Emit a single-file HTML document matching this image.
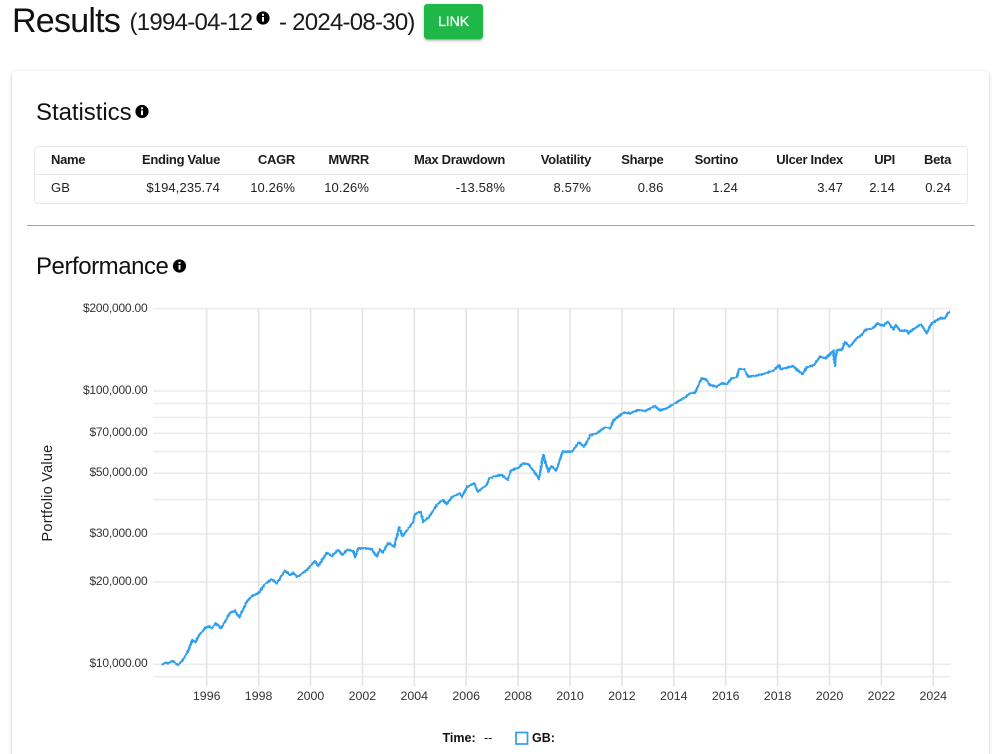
<!DOCTYPE html>
<html lang="en">
<head>
<meta charset="utf-8">
<title>Results</title>
<style>
html,body{margin:0;padding:0;background:#fff;width:1000px;height:754px;overflow:hidden;}
body{font-family:"Liberation Sans",sans-serif;color:#000;}
#wrap{position:relative;width:1000px;height:754px;overflow:hidden;background:#fff;}
.a{position:absolute;white-space:nowrap;}
.card{position:absolute;left:12px;top:71px;width:977px;height:700px;background:#fff;border-radius:4px;box-shadow:0 2px 1px -1px rgba(0,0,0,.2),0 1px 1px 0 rgba(0,0,0,.14),0 1px 4px 0 rgba(0,0,0,.18);}
.btn{position:absolute;left:424px;top:4px;width:59px;height:34.5px;background:#1db848;border-radius:3px;color:#fff;font-size:14px;line-height:34.5px;text-align:center;-webkit-text-stroke:.3px #fff;box-shadow:0 3px 1px -2px rgba(0,0,0,.2),0 2px 2px 0 rgba(0,0,0,.14),0 1px 5px 0 rgba(0,0,0,.12);}
.tbl{position:absolute;left:34px;top:146px;width:932px;height:56px;border:1px solid #e8e8e8;border-radius:4px;}
.line{position:absolute;left:35px;top:174px;width:932px;height:1px;background:#e8e8e8;}
.c{position:absolute;white-space:nowrap;font-size:13px;line-height:16px;color:#222;letter-spacing:.12px;}
.h{font-weight:bold;letter-spacing:-.3px;top:152px;color:#1c1c1c;}
.d{top:180px;}
.r{transform:translateX(-100%);}
.hr{position:absolute;left:27px;top:225px;width:948px;height:1px;background:#a3a3a3;}
svg{position:absolute;left:0;top:0;}
</style>
</head>
<body>
<div id="wrap">
<div class="a" style="left:12px;top:0px;font-size:34px;line-height:42px;letter-spacing:-.75px;color:#111;">Results</div>
<div class="a" style="left:129.5px;top:7px;font-size:24px;line-height:32px;letter-spacing:-.72px;color:#1a1a1a;">(1994-04-12</div>
<div class="a" style="left:279px;top:7px;font-size:24px;line-height:32px;letter-spacing:-.75px;color:#1a1a1a;">- 2024-08-30)</div>
<div class="btn">LINK</div>

<div class="card"></div>
<div class="a" style="left:36px;top:98px;font-size:24px;line-height:30px;letter-spacing:-.05px;color:#111;">Statistics</div>

<div class="tbl"></div>
<div class="line"></div>
<span class="c h" style="left:51px;">Name</span>
<span class="c h r" style="left:220px;">Ending Value</span>
<span class="c h r" style="left:295px;">CAGR</span>
<span class="c h r" style="left:369px;">MWRR</span>
<span class="c h r" style="left:505px;">Max Drawdown</span>
<span class="c h r" style="left:591px;">Volatility</span>
<span class="c h r" style="left:663.5px;">Sharpe</span>
<span class="c h r" style="left:738px;">Sortino</span>
<span class="c h r" style="left:843px;">Ulcer Index</span>
<span class="c h r" style="left:895px;">UPI</span>
<span class="c h r" style="left:951px;">Beta</span>
<span class="c d" style="left:51px;">GB</span>
<span class="c d r" style="left:220px;">$194,235.74</span>
<span class="c d r" style="left:295px;">10.26%</span>
<span class="c d r" style="left:369px;">10.26%</span>
<span class="c d r" style="left:505px;">-13.58%</span>
<span class="c d r" style="left:591px;">8.57%</span>
<span class="c d r" style="left:663.5px;">0.86</span>
<span class="c d r" style="left:738px;">1.24</span>
<span class="c d r" style="left:843px;">3.47</span>
<span class="c d r" style="left:895px;">2.14</span>
<span class="c d r" style="left:951px;">0.24</span>

<div class="hr"></div>
<div class="a" style="left:36px;top:252px;font-size:24px;line-height:30px;letter-spacing:-.45px;color:#111;">Performance</div>

<svg width="1000" height="754" viewBox="0 0 1000 754" xmlns="http://www.w3.org/2000/svg">
<defs>
<filter id="jit" x="-2%" y="-2%" width="104%" height="104%">
<feTurbulence type="fractalNoise" baseFrequency="0.5" numOctaves="2" seed="4" result="n"/>
<feDisplacementMap in="SourceGraphic" in2="n" scale="2" xChannelSelector="R" yChannelSelector="G"/>
</filter>
</defs>
<!-- info icons -->
<g>
<circle cx="263" cy="18" r="6.6" fill="#000"/><rect x="262" y="17" width="2" height="4.6" fill="#fff"/><rect x="262" y="13.8" width="2" height="2" fill="#fff"/>
<circle cx="142" cy="111.5" r="6.6" fill="#000"/><rect x="141" y="110.5" width="2" height="4.6" fill="#fff"/><rect x="141" y="107.3" width="2" height="2" fill="#fff"/>
<circle cx="179.5" cy="266" r="6.6" fill="#000"/><rect x="178.5" y="265" width="2" height="4.6" fill="#fff"/><rect x="178.5" y="261.8" width="2" height="2" fill="#fff"/>
</g>
<!-- horizontal grid -->
<g stroke="#ececec" stroke-width="1.6" fill="none">
<path d="M153 308.7H951M153 391H951M153 403.5H951M153 417.5H951M153 433.3H951M153 451.6H951M153 473.2H951M153 499.7H951M153 533.8H951M153 581.9H951M153 664.3H951M153 676.8H951"/>
</g>
<!-- vertical grid -->
<g stroke="#e4e4e4" stroke-width="1.6" fill="none">
<path d="M206.7 308V686M258.6 308V686M310.5 308V686M362.4 308V686M414.3 308V686M466.2 308V686M518.1 308V686M570 308V686M621.9 308V686M673.8 308V686M725.7 308V686M777.6 308V686M829.5 308V686M881.4 308V686M933.3 308V686"/>
</g>
<!-- series -->
<path filter="url(#jit)" fill="none" stroke="#2f9fec" stroke-width="2.3" stroke-linejoin="round" d="M161.7 665L166 662.7L168.3 663.3L172.7 661L178.3 665L183.3 659.3L188.3 650.7L192.3 640L195.7 642.3L199 635.3L205 628.3L209.3 626L211.7 628.3L216 623.3L221 628.3L225 621.7L230 612.7L235 610.7L239.3 617.3L246.7 601.7L251.7 596L258.3 593.3L265 584L271.7 579.3L276.7 583.3L280 578.3L285 570.7L290 575L293.3 572.7L296.7 576.7L300 575L306.7 570L315 561L318.3 566L326.7 552.7L331.7 556L338.3 550L342.7 555L346.7 550L353.3 551L355 557.3L358.3 548.3L366.7 548.3L371.7 549.3L376.7 556.7L380 549.3L382.7 553L388.3 543L394.3 546.7L399 527.3L402.7 536L413.3 521.7L415 514L420.7 511.7L423.3 521.7L429.3 516.7L437.3 504L443.3 500L446.7 504L451.7 497.3L460 493.3L461.7 496.7L467.3 486.7L474.3 483.3L477.7 491.7L486.7 485L489.3 478.3L495 476L501.7 475L507.7 480L510.7 470.7L518.3 467.7L523.3 463.3L528.3 464.3L533.3 470.7L539 479L543.3 455L548.3 471.7L551.7 465.7L556 470.7L562.7 451.7L571.7 451.7L579 442.3L584 446.7L590.7 435L596.7 433.3L605 427.3L610 428.3L613.3 420.7L623.3 412.7L630 413.3L638.3 410L645 411L655 406L660 410.5L666.7 408.3L675 403.3L685 397.3L690 393.3L695 392.7L701.7 378.3L705.7 379.3L710 385L716.7 386.7L721.7 383.3L726.7 384.3L731.7 378.3L736.7 377.3L739 369L744 369.3L748.3 376.7L760 375L766.7 372.7L773.3 370.7L779 365L780.7 369.3L793.3 366L798.3 371L802.7 374L806.7 367.3L814 365L820 356.7L825.7 358.3L833.3 350.7L835 366L836.7 350L841.7 350L845 342.3L850 346.7L856.7 338.3L861.7 335L865 330L873.3 328.3L877.3 323.3L883.3 326L887.7 321.7L893.3 329.3L896 325L900 330.7L906.7 330.7L908.3 333.3L913.3 329.3L921 324.3L926.7 333.3L931.7 323.3L940 318.3L945 318.3L948.3 312.7L950 311.7"/>
<!-- y labels -->
<g font-family="Liberation Sans, sans-serif" font-size="12" fill="#333" text-anchor="end" letter-spacing="-.2">
<text x="147.5" y="312">$200,000.00</text>
<text x="147.5" y="394">$100,000.00</text>
<text x="147.5" y="436">$70,000.00</text>
<text x="147.5" y="476">$50,000.00</text>
<text x="147.5" y="537">$30,000.00</text>
<text x="147.5" y="585">$20,000.00</text>
<text x="147.5" y="667">$10,000.00</text>
</g>
<text transform="translate(52,493) rotate(-90)" font-family="Liberation Sans, sans-serif" font-size="14.5" fill="#222" text-anchor="middle" letter-spacing=".25">Portfolio Value</text>
<!-- x labels -->
<g font-family="Liberation Sans, sans-serif" font-size="12.4" fill="#333" text-anchor="middle">
<text x="206.7" y="700">1996</text><text x="258.6" y="700">1998</text><text x="310.5" y="700">2000</text><text x="362.4" y="700">2002</text><text x="414.3" y="700">2004</text><text x="466.2" y="700">2006</text><text x="518.1" y="700">2008</text><text x="570" y="700">2010</text><text x="621.9" y="700">2012</text><text x="673.8" y="700">2014</text><text x="725.7" y="700">2016</text><text x="777.6" y="700">2018</text><text x="829.5" y="700">2020</text><text x="881.4" y="700">2022</text><text x="933.3" y="700">2024</text>
</g>
<!-- legend -->
<g font-family="Liberation Sans, sans-serif" font-size="12.5" fill="#111">
<text x="442.5" y="742" font-weight="bold">Time:</text>
<text x="484" y="742">--</text>
<rect x="516" y="732.5" width="11.5" height="11.5" fill="#fff" stroke="#2f9fec" stroke-width="1.7"/>
<text x="532" y="742" font-weight="bold">GB:</text>
</g>
</svg>
</div>
</body>
</html>
